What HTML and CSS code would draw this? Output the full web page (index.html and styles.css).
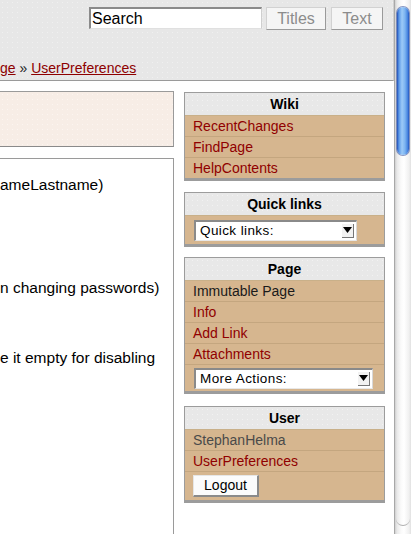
FILE: index.html
```html
<!DOCTYPE html>
<html>
<head>
<meta charset="utf-8">
<link rel="stylesheet" href="styles.css">
</head>
<body>
<div class="window">
  <div class="viewport">
    <div class="header">
      <div class="searchbar">
        <div class="search-input">Search</div>
        <div class="btn btn-titles">Titles</div>
        <div class="btn btn-text">Text</div>
      </div>
      <div class="crumbs"><a href="#">ge</a> <span class="sep">»</span> <a href="#">UserPreferences</a></div>
    </div>
    <div class="body">
      <div class="content">
        <div class="msgbox"></div>
        <div class="formbox">
          <div class="line l1">ameLastname)</div>
          <div class="line l2">n changing passwords)</div>
          <div class="line l3">e it empty for disabling</div>
        </div>
      </div>
      <div class="sidebar">
        <div class="panel panel-wiki">
          <div class="panel-title">Wiki</div>
          <div class="item"><a href="#">RecentChanges</a></div>
          <div class="item"><a href="#">FindPage</a></div>
          <div class="item last"><a href="#">HelpContents</a></div>
        </div>
        <div class="panel panel-quick">
          <div class="panel-title">Quick links</div>
          <div class="item last selrow selrow-quick">
            <div class="select sel-quick"><span class="sel-text">Quick links:</span><span class="sel-arrow"><svg width="9" height="6" viewBox="0 0 9 6"><path d="M0 0h9L4.5 6z" fill="#000"/></svg></span></div>
          </div>
        </div>
        <div class="panel panel-page">
          <div class="panel-title">Page</div>
          <div class="item plain">Immutable Page</div>
          <div class="item"><a href="#">Info</a></div>
          <div class="item"><a href="#">Add Link</a></div>
          <div class="item"><a href="#">Attachments</a></div>
          <div class="item last selrow">
            <div class="select sel-more"><span class="sel-text">More Actions:</span><span class="sel-arrow"><svg width="9" height="6" viewBox="0 0 9 6"><path d="M0 0h9L4.5 6z" fill="#000"/></svg></span></div>
          </div>
        </div>
        <div class="panel panel-user">
          <div class="panel-title">User</div>
          <div class="item user">StephanHelma</div>
          <div class="item"><a href="#">UserPreferences</a></div>
          <div class="item last btnrow"><div class="logout">Logout</div></div>
        </div>
      </div>
    </div>
  </div>
  <div class="scrollbar">
    <div class="thumb"></div>
    <div class="track-end"></div>
  </div>
</div>
</body>
</html>
```

FILE: styles.css
```css
html, body {
  margin: 0;
  padding: 0;
  height: 100%;
  overflow: hidden;
}
body {
  font-family: "Liberation Sans", Arial, sans-serif;
  font-size: 14px;
  color: #000;
  background: #fff;
}
.window {
  display: flex;
  height: 534px;
}
.viewport {
  width: 394px;
  display: flex;
  flex-direction: column;
  overflow: hidden;
}
.header {
  height: 81px;
  background-color: #e7e7e7;
  background-image: radial-gradient(circle, #f0f0f0 0.6px, transparent 0.8px);
  background-size: 5px 5px;
  border-bottom: 1px solid #9a9a9a;
  border-right: 1px solid #d0d0d0;
  box-sizing: border-box;
  display: flex;
  flex-direction: column;
}
.searchbar {
  display: flex;
  padding-top: 7px;
  padding-left: 89px;
}
.search-input {
  width: 173px;
  height: 22px;
  box-sizing: border-box;
  background: #fff;
  border-top: 2px solid #8a8a8a;
  border-left: 2px solid #8a8a8a;
  border-right: 1px solid #cfcfcf;
  border-bottom: 1px solid #e0e0e0;
  font-size: 16px;
  line-height: 20px;
  padding-left: 1px;
  color: #000;
}
.btn {
  height: 23px;
  box-sizing: border-box;
  background: #f5f5f5;
  border: 1px solid #d2d2d2;
  border-right-color: #9a9a9a;
  border-bottom-color: #9a9a9a;
  color: #8c8c8c;
  font-size: 16px;
  line-height: 21px;
  text-align: center;
}
.btn-titles {
  width: 60px;
  margin-left: 4px;
}
.btn-text {
  width: 52px;
  margin-left: 5px;
}
.crumbs {
  margin-top: 30px;
  line-height: 17px;
}
.crumbs a {
  color: #8e0000;
  text-decoration: underline;
}
.crumbs .sep {
  color: #222;
}
.body {
  display: flex;
  flex: 1;
  align-items: flex-start;
}
.content {
  width: 174px;
  flex: none;
  display: flex;
  flex-direction: column;
  height: 453px;
}
.msgbox {
  margin-top: 10px;
  height: 56px;
  box-sizing: border-box;
  background-color: #f7ede6;
  background-image: radial-gradient(circle, #fbf5f1 0.6px, transparent 0.8px);
  background-size: 5px 5px;
  border: 1px solid #9a9a9a;
  border-left: none;
  border-bottom-color: #8a8a8a;
}
.formbox {
  margin-top: 11px;
  flex: 1;
  border-top: 1px solid #9a9a9a;
  border-right: 1px solid #9a9a9a;
  padding-top: 17px;
}
.line {
  font-size: 15.5px;
  line-height: 18px;
  white-space: nowrap;
}
.l2 {
  margin-top: 85px;
}
.l3 {
  margin-top: 52px;
}
.sidebar {
  width: 201px;
  margin-left: 10px;
  margin-top: 11px;
  flex: none;
}
.panel {
  border: 1px solid #9c9c9c;
  border-bottom: 3px solid #9c9c9c;
  background: #d6b68f;
}
.panel-wiki {
  margin-bottom: 11px;
}
.panel-quick {
  margin-bottom: 10px;
}
.panel-page {
  margin-bottom: 12px;
}
.panel-title {
  height: 22px;
  line-height: 22px;
  text-align: center;
  font-weight: bold;
  background-color: #e8e8e8;
  background-image: radial-gradient(circle, #f2f2f2 0.6px, transparent 0.8px);
  background-size: 5px 5px;
  border-bottom: 1px solid #c9b089;
}
.item {
  height: 20px;
  line-height: 20px;
  padding-left: 8px;
  border-bottom: 1px solid #c4a67f;
  white-space: nowrap;
}
.item.last {
  border-bottom: none;
}
.item a {
  color: #900000;
  text-decoration: none;
}
.item.plain {
  color: #1a1a1a;
}
.item.user {
  color: #4a4a4a;
}
.selrow {
  height: 26px;
  padding-left: 9px;
  display: flex;
  align-items: center;
}
.selrow-quick {
  height: 28px;
}
.select {
  height: 21px;
  box-sizing: border-box;
  background: #fff;
  border-top: 2px solid #8a8a8a;
  border-left: 2px solid #8a8a8a;
  border-right: 1px solid #d8d8d8;
  border-bottom: 1px solid #e8e8e8;
  display: flex;
  align-items: center;
  justify-content: space-between;
  padding-left: 4px;
  padding-right: 2px;
}
.sel-quick {
  width: 163px;
}
.sel-more {
  width: 179px;
}
.sel-text {
  letter-spacing: 0.4px;
  font-size: 13.5px;
  line-height: 16px;
}
.sel-arrow {
  width: 12px;
  height: 14px;
  box-sizing: border-box;
  background: #f2f2f2;
  border-right: 1px solid #777;
  border-bottom: 1px solid #777;
  display: flex;
  align-items: center;
  justify-content: center;
}
.btnrow {
  height: 28px;
  padding-left: 8px;
  display: flex;
  align-items: center;
}
.logout {
  width: 66px;
  height: 22px;
  box-sizing: border-box;
  background: #fbfbfb;
  border: 1px solid #e6e6e6;
  border-right: 2px solid #8a8a8a;
  border-bottom: 2px solid #8a8a8a;
  text-align: center;
  line-height: 19px;
  font-size: 14px;
  color: #000;
}
.scrollbar {
  width: 17px;
  flex: none;
  position: relative;
  background: linear-gradient(to right, #cfcfcf 0, #e9e9e9 2px, #fafafa 6px, #ffffff 9px, #f0f0f0 14px, #d9d9d9 17px);
  border-left: 1px solid #a8a8a8;
  box-sizing: border-box;
}
.thumb {
  position: absolute;
  left: 2px;
  top: 7px;
  width: 12px;
  height: 148px;
  border-radius: 6px;
  background: linear-gradient(to right, #1f4fb8 0, #5d9ae8 2px, #9ccaf7 5px, #7bb3f1 8px, #3f7ddc 11px, #1f4fb8 12px);
  box-shadow: 0 0 0 1px rgba(20, 50, 140, 0.5);
}
.track-end {
  position: absolute;
  left: 1px;
  bottom: 8px;
  width: 14px;
  height: 10px;
  border-radius: 0 0 7px 7px;
  border-bottom: 1px solid #b0b0b0;
}
```
